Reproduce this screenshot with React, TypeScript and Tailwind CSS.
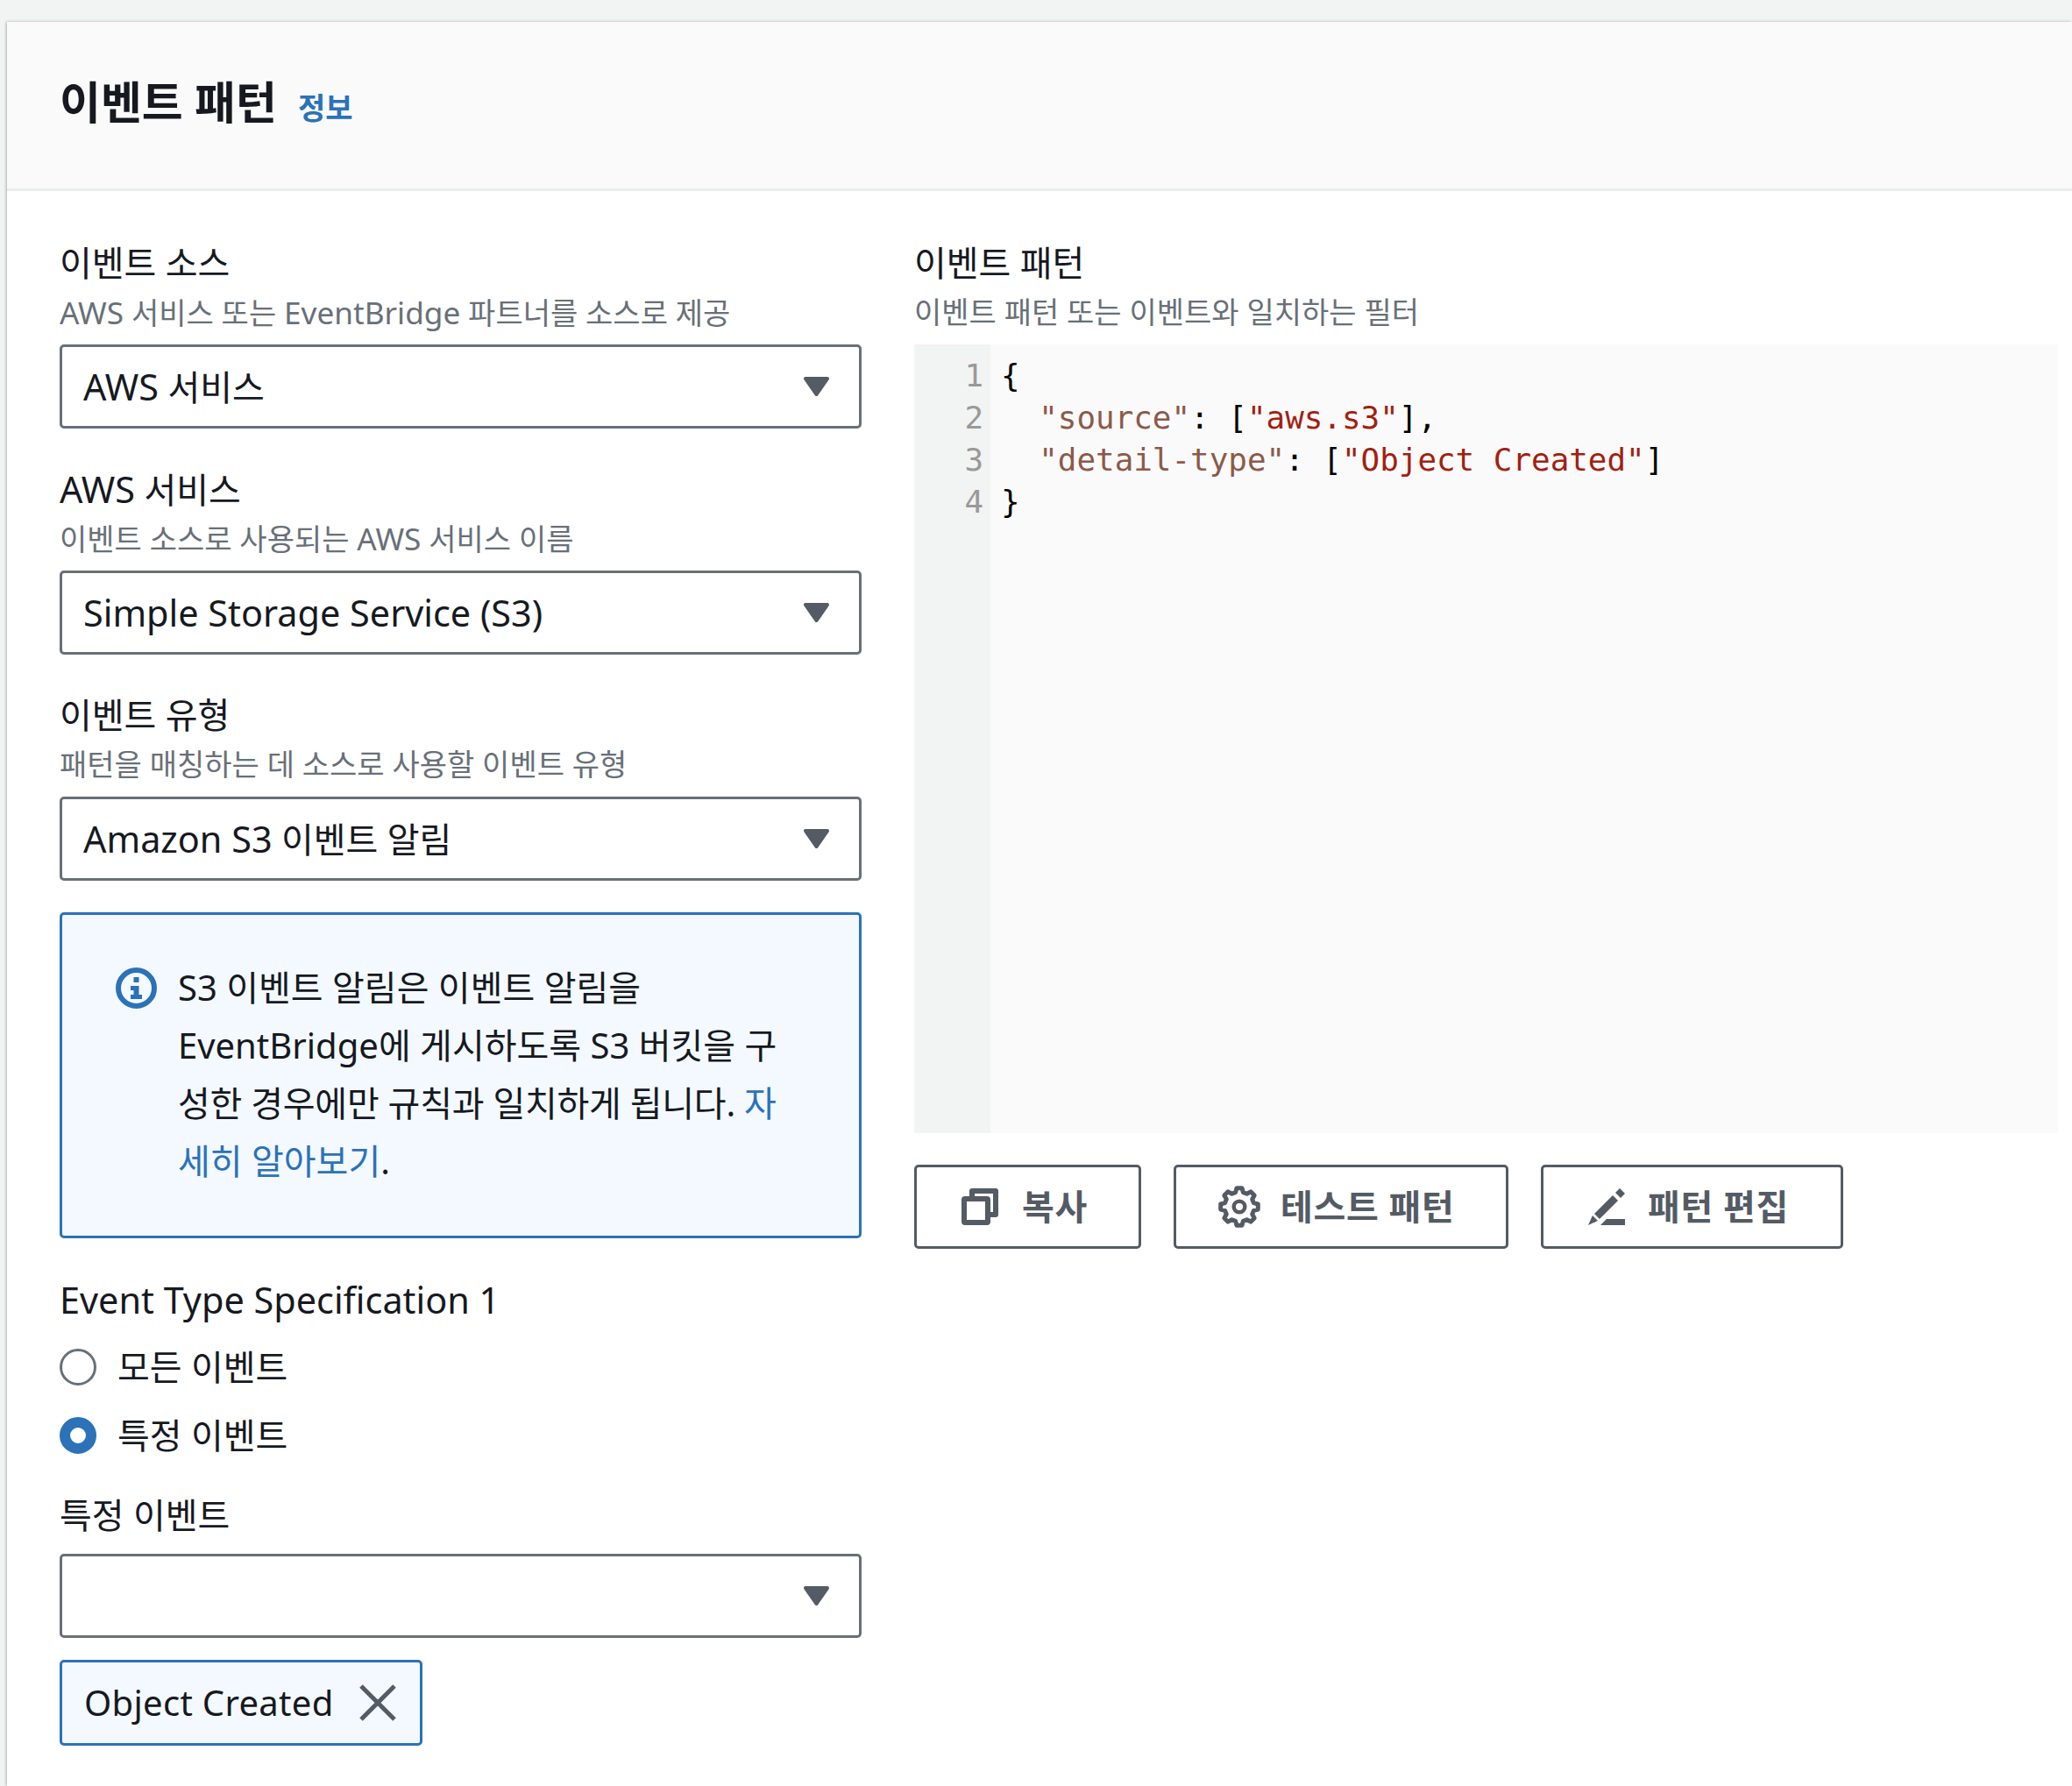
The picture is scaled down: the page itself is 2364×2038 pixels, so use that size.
const sans = "font-['Noto_Sans','Noto_Sans_CJK_KR',sans-serif]";

// latin glyphs run a bit wider in the reference
function L({ children }: { children: React.ReactNode }) {
  return <span className="text-[1.035em]">{children}</span>;
}

function Caret() {
  return (
    <svg className="w-[31px] h-[25px] absolute right-[33px] top-[32px]" viewBox="0 0 31 25">
      <path d="M3 4 H28 L15.5 22 Z" fill="#545b64" stroke="#545b64" strokeWidth="4" strokeLinejoin="round" />
    </svg>
  );
}

function Select({ value }: { value?: React.ReactNode }) {
  return (
    <div className="relative h-[96px] border-[3px] border-[#687078] rounded-[5px] bg-white pl-[24px] flex items-center text-[40px] text-[#16191f]">
      <span>{value}</span>
      <Caret />
    </div>
  );
}

function Field({ label, desc, value }: { label: React.ReactNode; desc: React.ReactNode; value: React.ReactNode }) {
  return (
    <div>
      <div className="h-[50px] pt-[2px] leading-[50px] text-[40px] text-[#16191f]">{label}</div>
      <div className="h-[50px] mt-2 leading-[50px] text-[34px] text-[#687078]">{desc}</div>
      <div className="mt-3">
        <Select value={value} />
      </div>
    </div>
  );
}

function Radio({ checked, label }: { checked?: boolean; label: string }) {
  return (
    <div className="flex items-center h-[50px] gap-[24px]">
      {checked ? (
        <span className="w-[42px] h-[42px] rounded-full border-[12px] border-[#2b72b9] bg-white" />
      ) : (
        <span className="w-[42px] h-[42px] rounded-full border-[3px] border-[#687078] bg-white" />
      )}
      <span className="text-[40px] leading-[50px] text-[#16191f]">{label}</span>
    </div>
  );
}

function CopyIcon() {
  return (
    <svg className="w-[42px] h-[42px]" viewBox="0 0 42 42" fill="none" stroke="#545b64" strokeWidth="6" strokeLinejoin="round">
      <rect x="3" y="12" width="27" height="27" rx="1" />
      <path d="M12 9 V3 H39 V30 H33" />
    </svg>
  );
}

function gearPath() {
  const pts: string[] = [];
  for (let i = 0; i < 8; i++) {
    const a = -90 + i * 45;
    const p = (deg: number, r: number) => {
      const t = (deg * Math.PI) / 180;
      return `${(24 + r * Math.cos(t)).toFixed(2)} ${(24 + r * Math.sin(t)).toFixed(2)}`;
    };
    pts.push(p(a - 15, 17), p(a - 8, 21.5), p(a + 8, 21.5), p(a + 15, 17));
  }
  return "M" + pts.join(" L") + " Z";
}

function GearIcon() {
  return (
    <svg className="w-[48px] h-[48px]" viewBox="0 0 48 48" fill="none" stroke="#545b64" strokeWidth="5" strokeLinejoin="round">
      <path d={gearPath()} />
      <circle cx="24" cy="24" r="6.3" strokeWidth="4.5" />
    </svg>
  );
}

function EditIcon() {
  return (
    <svg className="w-[42px] h-[42px]" viewBox="0 0 42 42" fill="#545b64">
      <path d="M36 0 L42 6 L37 11 L31 5 Z" />
      <path d="M28 8 L34 14 L13 35 L7 29 Z" />
      <path d="M5 31 L11 37 L0 42 Z" />
      <path d="M21 35 H42 V42 H14 Z" />
    </svg>
  );
}

function Btn({ w, pl, gap, icon, label }: { w: string; pl: string; gap: string; icon: React.ReactNode; label: string }) {
  return (
    <div className={`${w} ${pl} ${gap} h-[96px] border-[3px] border-[#545b64] rounded-[5px] flex items-center text-[40px] font-bold tracking-[0.7px] text-[#545b64]`}>
      {icon}
      <span>{label}</span>
    </div>
  );
}

export default function App() {
  return (
    <div className={`min-h-[2038px] bg-[#f2f3f3] pt-[25px] pl-[8px] ${sans}`}>
      <div className="bg-white min-h-[2013px] shadow-[-1px_0_3px_rgba(0,28,36,0.3)]">
        <div className="h-[193px] bg-[#fafafa] border-b-[3px] border-[#eaeded] flex items-center pl-[60px]">
          <h1 className="mb-[8px] text-[51px] font-bold text-[#16191f] leading-none">이벤트 패턴</h1>
          <a className="ml-[24px] mt-[6px] text-[34px] font-bold text-[#2b72b9]">정보</a>
        </div>
        <div className="grid grid-cols-[915px_1305px] gap-x-[60px] pl-[60px] pt-[55px]">
          <div>
            <div className="flex flex-col gap-[42px]">
              <Field label="이벤트 소스" desc={<><L>AWS</L> 서비스 또는 <L>EventBridge</L> 파트너를 소스로 제공</>} value={<><L>AWS</L> 서비스</>} />
              <Field label={<><L>AWS</L> 서비스</>} desc={<>이벤트 소스로 사용되는 <L>AWS</L> 서비스 이름</>} value={<L>Simple Storage Service (S3)</L>} />
              <Field label="이벤트 유형" desc="패턴을 매칭하는 데 소스로 사용할 이벤트 유형" value={<><L>Amazon S3</L> 이벤트 알림</>} />
            </div>
            <div className="mt-[36px] h-[372px] border-[3px] border-[#2b72b9] rounded-[5px] bg-[#f3f9ff] pl-[61px] pt-[50px] flex gap-[24px] text-[40px] leading-[66px] text-[#16191f]">
              <svg className="w-[47px] h-[47px] mt-[10px] shrink-0" viewBox="0 0 47 47" fill="none">
                <circle cx="23.5" cy="23.5" r="20.5" stroke="#2b72b9" strokeWidth="6" />
                <rect x="20.5" y="11" width="6" height="6" fill="#2b72b9" />
                <path d="M17 21 H26.5 V31 H30 V36 H17 V31 H20.5 V26 H17 Z" fill="#2b72b9" />
              </svg>
              <p>
                S3 이벤트 알림은 이벤트 알림을
                <br />
                EventBridge에 게시하도록 S3 버킷을 구
                <br />
                <span className="tracking-[-0.25px]">
                  성한 경우에만 규칙과 일치하게 됩니다. <a className="text-[#2b72b9]">자</a>
                </span>
                <br />
                <a className="text-[#2b72b9]">세히 알아보기</a>.
              </p>
            </div>
            <div className="mt-[45px] h-[50px] leading-[50px] text-[40px] text-[#16191f]">
              <L>Event Type Specification 1</L>
            </div>
            <div className="mt-[27px] flex flex-col gap-[28px]">
              <Radio label="모든 이벤트" />
              <Radio checked label="특정 이벤트" />
            </div>
            <div className="mt-[41px] h-[50px] leading-[50px] text-[40px] text-[#16191f]">특정 이벤트</div>
            <div className="mt-[19px]">
              <Select />
            </div>
            <div className="mt-[25px] w-[414px] h-[98px] border-[3px] border-[#2b72b9] rounded-[5px] bg-[#f3f9ff] pl-[25px] flex items-center gap-[28px] text-[40px] tracking-[0.3px] text-[#16191f]">
              <span>Object Created</span>
              <svg className="w-[44px] h-[44px]" viewBox="0 0 44 44" fill="none" stroke="#545b64" strokeWidth="5">
                <path d="M3 3 L41 41 M41 3 L3 41" />
              </svg>
            </div>
          </div>
          <div>
            <div className="h-[50px] pt-[2px] leading-[50px] text-[40px] text-[#16191f]">이벤트 패턴</div>
            <div className="h-[50px] mt-2 leading-[50px] text-[34px] text-[#687078]">이벤트 패턴 또는 이벤트와 일치하는 필터</div>
            <div className="mt-3 h-[900px] bg-[#fafafa] flex font-['DejaVu_Sans_Mono',monospace] text-[35.9px] leading-[48px]">
              <div className="w-[87px] bg-[#f2f3f3] pt-[12px] pr-[8px] text-right text-[#999999]">
                <div>1</div>
                <div>2</div>
                <div>3</div>
                <div>4</div>
              </div>
              <div className="pl-[12px] pt-[12px] text-black whitespace-pre">
                <div>{"{"}</div>
                <div>
                  {"  "}
                  <span className="text-[#8c5a4a]">"source"</span>: [<span className="text-[#a31f12]">"aws.s3"</span>],
                </div>
                <div>
                  {"  "}
                  <span className="text-[#8c5a4a]">"detail-type"</span>: [<span className="text-[#a31f12]">"Object Created"</span>]
                </div>
                <div>{"}"}</div>
              </div>
            </div>
            <div className="mt-[36px] flex gap-[37px]">
              <Btn w="w-[259px]" pl="pl-[51px]" gap="gap-[27px]" icon={<CopyIcon />} label="복사" />
              <Btn w="w-[382px]" pl="pl-[48px]" gap="gap-[23px]" icon={<GearIcon />} label="테스트 패턴" />
              <Btn w="w-[345px]" pl="pl-[51px]" gap="gap-[26px]" icon={<EditIcon />} label="패턴 편집" />
            </div>
          </div>
        </div>
      </div>
    </div>
  );
}
